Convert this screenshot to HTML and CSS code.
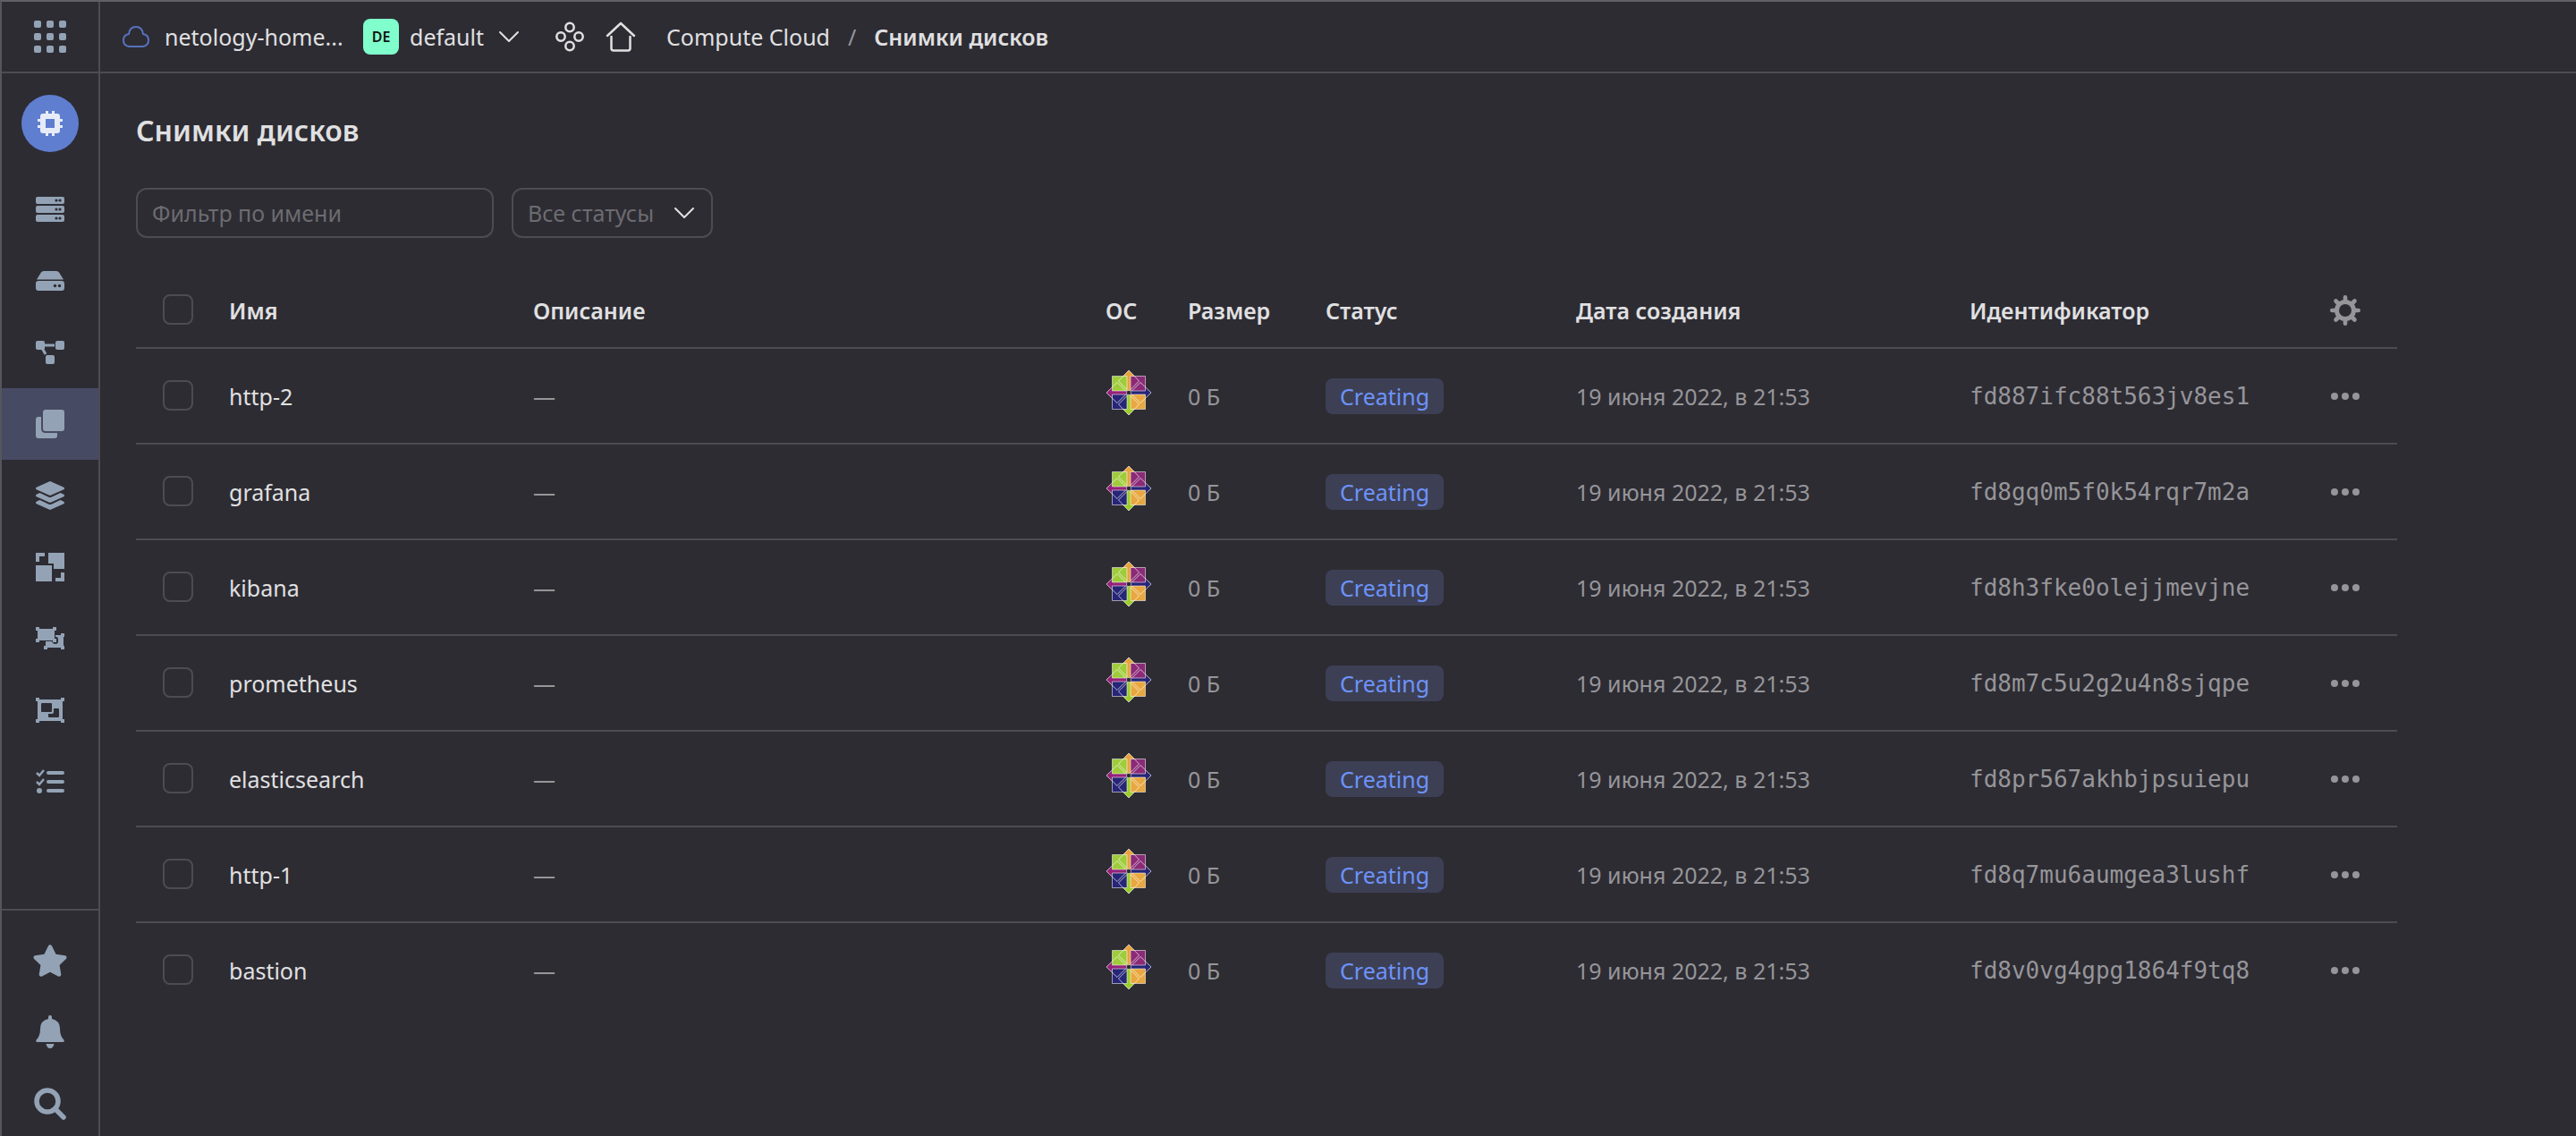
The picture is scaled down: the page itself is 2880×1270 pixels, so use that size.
FILE: index.html
```html
<!DOCTYPE html>
<html lang="ru">
<head>
<meta charset="utf-8">
<title>Снимки дисков</title>
<meta name="viewport" content="width=device-width, initial-scale=1">
<link rel="stylesheet" href="styles.css">
</head>
<body>
<svg class="sprite" aria-hidden="true">
  <symbol id="chevron" viewBox="0 0 24 14"><path d="M2 2l10 10L22 2" fill="none" stroke="currentColor" stroke-width="2" stroke-linecap="round" stroke-linejoin="round"/></symbol>
  <symbol id="dots" viewBox="0 0 32 8"><circle cx="4" cy="4" r="4"/><circle cx="16" cy="4" r="4"/><circle cx="28" cy="4" r="4"/></symbol>
  <symbol id="centos" viewBox="0 0 52 52">
    <path d="M26 1l12 12-12 12-12-12z" fill="#e8a33d"/>
    <path d="M51 26L39 38 27 26l12-12z" fill="#262577"/>
    <path d="M26 51L14 39l12-12 12 12z" fill="#9ccd2a"/>
    <path d="M1 26l12-12 12 12-12 12z" fill="#932279"/>
    <path d="M24.500 8h3v17h-3z" fill="#e8a33d"/>
    <path d="M24.500 27h3v17h-3z" fill="#9ccd2a"/>
    <path d="M8 24.500h17v3H8z" fill="#932279"/>
    <path d="M27 24.500h17v3H27z" fill="#262577"/>
    <g stroke="#fff" stroke-opacity=".55" stroke-width="1">
      <path d="M7.500 7.500H24V24H7.500z" fill="#9fcc3b"/>
      <path d="M28 7.500h16.500V24H28z" fill="#8b2a77"/>
      <path d="M7.500 28H24v16.500H7.500z" fill="#262577"/>
      <path d="M28 28h16.500v16.500H28z" fill="#e8a83f"/>
    </g>
    <g fill="none" stroke="#fff" stroke-opacity=".65" stroke-width="1">
      <path d="M24 22.500L14.500 13 26 1l11.500 12-9.500 9.500"/>
      <path d="M29.500 24l9.500-9.500L51 26 39 37.500 29.500 28"/>
      <path d="M28 29.500l9.500 9.500L26 51 14.500 39l9.500-9.500"/>
      <path d="M22.500 28L13 37.500 1 26l12-11.500 9.500 9.500"/>
    </g>
    <path d="M25 23.500h2l1.500 1.500v2L27 28.500h-2L23.500 27v-2z" fill="#2d2c33" stroke="#fff" stroke-opacity=".5"/>
  </symbol>
</svg>

<div class="app">
  <aside class="sidebar">
    <button class="menu" type="button" aria-label="Все сервисы">
      <svg width="36" height="36" viewBox="0 0 36 36"><g id="dot-row"><rect width="8" height="8" rx="2"/><rect x="14" width="8" height="8" rx="2"/><rect x="28" width="8" height="8" rx="2"/></g><use href="#dot-row" y="14"/><use href="#dot-row" y="28"/></svg>
    </button>
    <a class="service" href="#" aria-label="Compute Cloud">
      <svg width="28" height="28" viewBox="0 0 28 28"><path fill-rule="evenodd" d="M9 0h3v3h4V0h3v3h3q3 0 3 3v3h3v3h-3v4h3v3h-3v3q0 3-3 3h-3v3h-3v-3h-4v3H9v-3H6q-3 0-3-3v-3H0v-3h3v-4H0V9h3V6q0-3 3-3h3zM9 9v10h10V9z"/></svg>
    </a>
    <nav class="nav" aria-label="Разделы">
      <a class="nav-item" href="#" aria-label="Виртуальные машины"><svg width="32" height="32" viewBox="0 0 32 32"><path fill-rule="evenodd" d="M2 2h28q2 0 2 2v4q0 2-2 2H2q-2 0-2-2V4q0-2 2-2zM2 12h28q2 0 2 2v4q0 2-2 2H2q-2 0-2-2v-4q0-2 2-2zM2 22h28q2 0 2 2v4q0 2-2 2H2q-2 0-2-2v-4q0-2 2-2z"/><g class="cut"><circle cx="23" cy="6" r="1.600"/><circle cx="27" cy="6" r="1.600"/><circle cx="23" cy="16" r="1.600"/><circle cx="27" cy="16" r="1.600"/><circle cx="23" cy="26" r="1.600"/><circle cx="27" cy="26" r="1.600"/></g></svg></a>
      <a class="nav-item" href="#" aria-label="Диски"><svg width="32" height="32" viewBox="0 0 32 32"><path d="M9 5h14q2 0 3 1.500l5 8H1l5-8Q7 5 9 5z"/><rect y="16" width="32" height="11" rx="3"/><g class="cut"><circle cx="21.500" cy="21.500" r="1.700"/><circle cx="26.500" cy="21.500" r="1.700"/></g></svg></a>
      <a class="nav-item" href="#" aria-label="Сеть"><svg width="32" height="32" viewBox="0 0 32 32"><rect y="3" width="10" height="10" rx="2"/><rect x="22" y="3" width="10" height="10" rx="2"/><rect x="11" y="19" width="10" height="10" rx="2"/><path d="M9 8h12M7 11l4 7" fill="none" stroke="currentColor" stroke-width="3"/></svg></a>
      <a class="nav-item active" href="#" aria-label="Снимки дисков" aria-current="page"><svg width="32" height="32" viewBox="0 0 32 32"><rect x="8" width="24" height="24" rx="3"/><path d="M3 8h3v13q0 5 5 5h13v3q0 3-3 3H3q-3 0-3-3V11q0-3 3-3z"/></svg></a>
      <a class="nav-item" href="#" aria-label="Образы"><svg width="32" height="32" viewBox="0 0 512 512"><path d="M12.410 148.020l232.940 105.670c6.800 3.090 14.490 3.090 21.290 0l232.940-105.670c16.550-7.510 16.550-32.520 0-40.030L266.650 2.310a25.607 25.607 0 0 0-21.290 0L12.410 107.980c-16.550 7.510-16.550 32.530 0 40.040zm487.180 88.280l-58.090-26.330-161.640 73.270c-7.560 3.430-15.590 5.170-23.860 5.170s-16.290-1.740-23.860-5.170L70.510 209.970l-58.100 26.330c-16.550 7.500-16.550 32.500 0 40l232.940 105.590c6.800 3.080 14.490 3.080 21.290 0L499.590 276.300c16.550-7.500 16.550-32.500 0-40zm0 127.800l-57.870-26.230-161.860 73.370c-7.560 3.430-15.590 5.170-23.860 5.170s-16.290-1.740-23.860-5.170L70.290 337.870 12.410 364.100c-16.550 7.500-16.550 32.500 0 40l232.940 105.590c6.800 3.080 14.490 3.080 21.290 0L499.590 404.100c16.550-7.500 16.550-32.500 0-40z"/></svg></a>
      <a class="nav-item" href="#" aria-label="Группы размещения"><svg width="32" height="32" viewBox="0 0 32 32"><path d="M0 0h10v4H4v6H0zM14 0h18v18H20v-6h-6zM0 14h18v18H0zM28 22h4v10H22v-4h6z"/></svg></a>
      <a class="nav-item" href="#" aria-label="Группы машин"><svg width="32" height="32" viewBox="0 0 32 32"><path d="M11 12h20v14H11zM28 10h4v4h-4zM9 24h4v4H9zM28 24h4v4h-4z"/><path class="cut" d="M1 5h21v9h1q2 0 2 3v2q0 3-3 3-3 0-4-3H9z"/><path d="M2 5h19v13H2zM0 3h4v4H0zM19 3h4v4h-4zM0 16h4v4H0zM19 16h4v4h-4z"/></svg></a>
      <a class="nav-item" href="#" aria-label="Кластеры"><svg width="32" height="32" viewBox="0 0 32 32"><path d="M0 2h4v4H0zM28 2h4v4h-4zM0 26h4v4H0zM28 26h4v4h-4z"/><path fill-rule="evenodd" d="M2 4h28v24H2zM7 8q-1 0-1 1v8q0 1 1 1h10q1 0 1-1V9q0-1-1-1zM20 14v4q0 2-2 2h-4v3q0 1 1 1h10q1 0 1-1v-8q0-1-1-1z"/></svg></a>
      <a class="nav-item" href="#" aria-label="Операции"><svg width="32" height="32" viewBox="0 0 32 32"><rect x="12" y="4" width="20" height="4" rx="2"/><rect x="12" y="14" width="20" height="4" rx="2"/><rect x="12" y="24" width="20" height="4" rx="2"/><circle cx="4" cy="26" r="3"/><path d="M1 6l3 3 5-6M1 16l3 3 5-6" fill="none" stroke="currentColor" stroke-width="2.500"/></svg></a>
    </nav>
    <div class="tools">
      <button type="button" aria-label="Избранное"><svg width="40" height="36" viewBox="0 0 576 512"><path d="M259.300 17.800L194 150.200 47.900 171.500c-26.200 3.800-36.700 36.100-17.700 54.600l105.700 103-25 145.500c-4.500 26.300 23.200 46 46.400 33.700L288 439.600l130.700 68.700c23.200 12.200 50.900-7.400 46.400-33.700l-25-145.500 105.700-103c19-18.500 8.500-50.800-17.700-54.600L382 150.200 316.700 17.800c-11.700-23.600-45.600-23.900-57.400 0z"/></svg></button>
      <button type="button" aria-label="Уведомления"><svg width="32" height="38" viewBox="0 0 32 38"><path d="M16 0q2 0 2 2v2q9 2 9 11 0 8 4 12 2 3-1 3H2q-3 0-1-3 4-4 4-12 0-9 9-11V2q0-2 2-2zM11.500 32h9q-1 5-4.500 5t-4.500-5z"/></svg></button>
      <button type="button" aria-label="Поиск"><svg width="36" height="36" viewBox="0 0 36 36" fill="none" stroke="currentColor"><circle cx="15" cy="15" r="12" stroke-width="5.500"/><path d="M24 24l9 9" stroke-width="5.500" stroke-linecap="round"/></svg></button>
    </div>
  </aside>

  <div class="page">
    <header class="topbar">
      <a class="cloud" href="#"><svg width="32" height="26" viewBox="0 0 32 26" fill="none" stroke="currentColor" stroke-width="2"><path d="M8 24q-6-1-6-7t6-7Q9 2 16 2t8 8q6 1 6 7t-6 7z"/></svg><span>netology-home...</span></a>
      <button class="folder" type="button"><span class="folder-mark">DE</span><span>default</span><svg width="24" height="14"><use href="#chevron"/></svg></button>
      <div class="shortcuts">
        <a href="#" aria-label="Сервисы"><svg width="32" height="34" viewBox="0 0 32 34" fill="none" stroke="currentColor" stroke-width="2.500"><circle cx="16" cy="6.500" r="4.700"/><circle cx="6" cy="17" r="4.700"/><circle cx="26" cy="17" r="4.700"/><circle cx="16" cy="27.500" r="4.700"/></svg></a>
        <a href="#" aria-label="Главная"><svg width="34" height="34" viewBox="0 0 34 34" fill="none" stroke="currentColor" stroke-width="2.500" stroke-linecap="round" stroke-linejoin="round"><path d="M2 16L17 2l15 14M6.500 17v13q0 2.500 2.500 2.500h16q2.500 0 2.500-2.500V17"/></svg></a>
      </div>
      <nav class="crumbs" aria-label="Навигация"><a href="#">Compute Cloud</a><span class="slash">/</span><a class="current" href="#" aria-current="page">Снимки дисков</a></nav>
    </header>

    <main class="content">
      <h1>Снимки дисков</h1>
      <form class="filters">
        <input class="filter-name" type="text" placeholder="Фильтр по имени" aria-label="Фильтр по имени">
        <div class="filter-status">
          <select aria-label="Статус"><option>Все статусы</option><option>Creating</option></select>
          <svg width="24" height="14"><use href="#chevron"/></svg>
        </div>
      </form>
      <table class="snapshots">
        <colgroup><col class="c-check"><col class="c-name"><col><col class="c-os"><col class="c-size"><col class="c-status"><col class="c-date"><col class="c-id"><col class="c-more"></colgroup>
        <thead>
          <tr><th class="check"><input type="checkbox" aria-label="Выбрать все"></th><th>Имя</th><th>Описание</th><th>ОС</th><th>Размер</th><th>Статус</th><th>Дата создания</th><th>Идентификатор</th><th class="more"><button type="button" aria-label="Настройки таблицы"><svg width="34" height="34" viewBox="-17 -17 34 34"><circle r="9.500" fill="none" stroke="currentColor" stroke-width="5"/><g stroke="currentColor" stroke-width="4.600" stroke-linecap="round"><path d="M0-11v-3.700M0 11v3.700M-11 0h-3.700M11 0h3.700M8-8l2.500-2.500M8 8l2.500 2.500M-8 8l-2.500 2.500M-8-8l-2.500-2.500"/></g></svg></button></th></tr>
        </thead>
        <tbody>
          <tr><td class="check"><input type="checkbox" aria-label="http-2"></td><td class="name">http-2</td><td>—</td><td class="os"><svg width="52" height="52"><use href="#centos"/></svg></td><td>0 Б</td><td><span class="status">Creating</span></td><td>19 июня 2022, в 21:53</td><td class="id">fd887ifc88t563jv8es1</td><td class="more"><button type="button" aria-label="Действия"><svg width="32" height="8"><use href="#dots"/></svg></button></td></tr>
          <tr><td class="check"><input type="checkbox" aria-label="grafana"></td><td class="name">grafana</td><td>—</td><td class="os"><svg width="52" height="52"><use href="#centos"/></svg></td><td>0 Б</td><td><span class="status">Creating</span></td><td>19 июня 2022, в 21:53</td><td class="id">fd8gq0m5f0k54rqr7m2a</td><td class="more"><button type="button" aria-label="Действия"><svg width="32" height="8"><use href="#dots"/></svg></button></td></tr>
          <tr><td class="check"><input type="checkbox" aria-label="kibana"></td><td class="name">kibana</td><td>—</td><td class="os"><svg width="52" height="52"><use href="#centos"/></svg></td><td>0 Б</td><td><span class="status">Creating</span></td><td>19 июня 2022, в 21:53</td><td class="id">fd8h3fke0olejjmevjne</td><td class="more"><button type="button" aria-label="Действия"><svg width="32" height="8"><use href="#dots"/></svg></button></td></tr>
          <tr><td class="check"><input type="checkbox" aria-label="prometheus"></td><td class="name">prometheus</td><td>—</td><td class="os"><svg width="52" height="52"><use href="#centos"/></svg></td><td>0 Б</td><td><span class="status">Creating</span></td><td>19 июня 2022, в 21:53</td><td class="id">fd8m7c5u2g2u4n8sjqpe</td><td class="more"><button type="button" aria-label="Действия"><svg width="32" height="8"><use href="#dots"/></svg></button></td></tr>
          <tr><td class="check"><input type="checkbox" aria-label="elasticsearch"></td><td class="name">elasticsearch</td><td>—</td><td class="os"><svg width="52" height="52"><use href="#centos"/></svg></td><td>0 Б</td><td><span class="status">Creating</span></td><td>19 июня 2022, в 21:53</td><td class="id">fd8pr567akhbjpsuiepu</td><td class="more"><button type="button" aria-label="Действия"><svg width="32" height="8"><use href="#dots"/></svg></button></td></tr>
          <tr><td class="check"><input type="checkbox" aria-label="http-1"></td><td class="name">http-1</td><td>—</td><td class="os"><svg width="52" height="52"><use href="#centos"/></svg></td><td>0 Б</td><td><span class="status">Creating</span></td><td>19 июня 2022, в 21:53</td><td class="id">fd8q7mu6aumgea3lushf</td><td class="more"><button type="button" aria-label="Действия"><svg width="32" height="8"><use href="#dots"/></svg></button></td></tr>
          <tr><td class="check"><input type="checkbox" aria-label="bastion"></td><td class="name">bastion</td><td>—</td><td class="os"><svg width="52" height="52"><use href="#centos"/></svg></td><td>0 Б</td><td><span class="status">Creating</span></td><td>19 июня 2022, в 21:53</td><td class="id">fd8v0vg4gpg1864f9tq8</td><td class="more"><button type="button" aria-label="Действия"><svg width="32" height="8"><use href="#dots"/></svg></button></td></tr>
        </tbody>
      </table>
    </main>
  </div>
</div>
</body>
</html>
```

FILE: styles.css
```css
:root {
  --bg: #2d2c33;
  --line: #4d4c52;
  --text: #e0e0e1;
  --muted: #969599;
  --hint: #6c6b70;
  --icon: #93a3b5;
  --blue: #6d93fb;
}

*, *::before, *::after { box-sizing: border-box; }

body {
  margin: 0;
  background: var(--bg);
  color: var(--text);
  font: 25px/36px "Noto Sans", sans-serif;
}

svg { display: block; fill: currentColor; flex: none; }
svg[fill="none"] { fill: none; }
.sprite { position: absolute; width: 0; height: 0; }
a { color: inherit; text-decoration: none; }
button, input, select { font: inherit; color: inherit; }
button { padding: 0; border: 0; background: none; cursor: pointer; }

.app {
  display: flex;
  min-height: 100vh;
  border-top: 2px solid #606066;
  border-left: 2px solid #56555b;
}

/* Sidebar */
.sidebar {
  display: flex;
  flex-direction: column;
  width: 110px;
  flex: none;
  border-right: 2px solid var(--line);
  color: var(--icon);
}
.menu {
  display: grid;
  place-items: center;
  height: 80px;
  border-bottom: 2px solid var(--line);
}
.service {
  display: grid;
  place-items: center;
  align-self: center;
  width: 64px;
  height: 64px;
  margin: 24px 0;
  border-radius: 50%;
  background: #5f7ed0;
  color: #e6ebf8;
}
.nav { display: flex; flex-direction: column; flex: 1; }
.nav-item { display: grid; place-items: center; height: 80px; }
.nav-item.active { background: #474a63; }
.cut { fill: var(--bg); }
.tools {
  display: flex;
  flex-direction: column;
  gap: 8px;
  padding-top: 20px;
  border-top: 2px solid var(--line);
}
.tools button { display: grid; place-items: center; height: 72px; }

/* Top bar */
.page { flex: 1; min-width: 0; }
.topbar {
  display: flex;
  align-items: center;
  height: 80px;
  padding-left: 24px;
  border-bottom: 2px solid var(--line);
}
.cloud { display: flex; align-items: center; gap: 16px; width: 270px; white-space: nowrap; }
.cloud svg { color: #5872bd; }
.folder { display: flex; align-items: center; gap: 12px; width: 215px; }
.folder svg { margin-left: 4px; }
.folder-mark {
  width: 40px;
  height: 40px;
  border-radius: 8px;
  background: #80ffcc;
  color: #111;
  font-size: 16px;
  font-weight: 600;
  line-height: 40px;
  text-align: center;
}
.shortcuts { display: flex; gap: 24px; }
.crumbs { display: flex; gap: 20px; margin-left: 34px; }
.slash { color: var(--muted); }
.current { font-weight: 600; }

/* Content */
.content { padding: 44px 200px 40px 40px; }
h1 { margin: 0 0 44px; font-size: 32px; line-height: 40px; font-weight: 600; }
.filters { display: flex; gap: 20px; margin-bottom: 40px; }
.filter-name, .filter-status select {
  height: 56px;
  padding: 0 16px;
  border: 2px solid var(--line);
  border-radius: 12px;
  background: transparent;
  color: var(--hint);
}
.filter-name { width: 400px; }
.filter-name::placeholder { color: var(--hint); opacity: 1; }
.filter-status { display: grid; align-items: center; width: 225px; }
.filter-status select { grid-area: 1 / 1; width: 100%; appearance: none; }
.filter-status option { background: var(--bg); }
.filter-status svg { grid-area: 1 / 1; justify-self: end; margin-right: 20px; pointer-events: none; }

/* Table */
.snapshots { width: 100%; border-collapse: separate; border-spacing: 0; table-layout: fixed; color: var(--muted); }
.c-check { width: 84px; }
.c-name { width: 340px; }
.c-os { width: 92px; }
.c-size { width: 154px; }
.c-status { width: 280px; }
.c-date { width: 440px; }
.c-id { width: 381px; }
.c-more { width: 117px; }
th, td { padding: 0 0 0 20px; text-align: left; vertical-align: middle; white-space: nowrap; border-bottom: 2px solid var(--line); }
th { height: 84px; color: var(--text); font-weight: 600; }
td { height: 107px; }
tbody tr:last-child td { border-bottom-color: transparent; }
.check { padding: 0 0 2px 30px; }
.check input {
  display: block;
  appearance: none;
  width: 34px;
  height: 34px;
  margin: 0;
  border: 2px solid var(--line);
  border-radius: 8px;
}
.name { color: var(--text); }
.os { padding-bottom: 8px; }
.id { font-family: "DejaVu Sans Mono", monospace; font-size: 26px; }
.status {
  display: inline-block;
  padding: 0 16px;
  border-radius: 8px;
  background: #3d4055;
  color: var(--blue);
  line-height: 40px;
}
.more { padding: 0; color: var(--muted); }
.more button { display: block; margin: 0 auto; }
```
